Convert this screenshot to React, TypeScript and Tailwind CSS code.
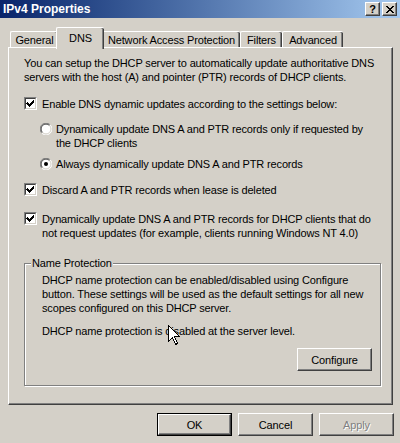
import type { ReactNode } from 'react';

const Check = ({ checked }: { checked: boolean }) => (
  <div className="w-[13px] h-[13px] shrink-0 border border-t-[#808080] border-l-[#808080] border-r-white border-b-white">
    <div className="w-full h-full bg-white border border-t-[#404040] border-l-[#404040] border-r-[#d4d0c8] border-b-[#d4d0c8] flex items-center justify-center">
      {checked && (
        <svg width="9" height="9" viewBox="0 0 9 9" shapeRendering="crispEdges">
          <path d="M1 3h1v1h1v1h1v-1h1v-1h1v-1h1v-1h1v3h-1v1h-1v1h-1v1h-1v1h-1v-1h-1v-1h-1v-1h-1z" fill="#000" />
        </svg>
      )}
    </div>
  </div>
);

const Radio = ({ selected }: { selected: boolean }) => (
  <svg width="12" height="12" viewBox="0 0 12 12" className="shrink-0">
    <circle cx="6" cy="6" r="5.5" fill="#fff" />
    <path d="M1.8 10.2 A5.5 5.5 0 0 1 10.2 1.8" fill="none" stroke="#808080" strokeWidth="1" />
    <path d="M10.2 1.8 A5.5 5.5 0 0 1 1.8 10.2" fill="none" stroke="#fff" strokeWidth="1" />
    <path d="M2.5 9.5 A4.5 4.5 0 0 1 9.5 2.5" fill="none" stroke="#404040" strokeWidth="1" />
    <path d="M9.5 2.5 A4.5 4.5 0 0 1 2.5 9.5" fill="none" stroke="#d4d0c8" strokeWidth="1" />
    {selected && <circle cx="6" cy="6" r="2" fill="#000" />}
  </svg>
);

const Button = ({ children, primary, disabled }: { children: ReactNode; primary?: boolean; disabled?: boolean }) => {
  const inner = (
    <div className="w-full h-full flex items-center justify-center border border-t-white border-l-white border-r-[#404040] border-b-[#404040] shadow-[inset_-1px_-1px_0_#808080]">
      <span className={disabled ? 'text-[#808080] [text-shadow:1px_1px_0_#fff]' : ''}>{children}</span>
    </div>
  );
  if (primary) {
    return <div className="w-[75px] h-[23px] border border-black">{inner}</div>;
  }
  return <div className="w-[75px] h-[23px]">{inner}</div>;
};

const Tab = ({ label, w, active }: { label: string; w: string; active?: boolean }) => (
  <div
    className={
      active
        ? `${w} h-[22px] -mx-[2px] -mb-[2px] relative z-10 bg-[#d4d0c8] border-t border-l border-t-white border-l-white rounded-tl-[2px] rounded-tr-[2px] shadow-[inset_-1px_0_0_#404040,inset_-2px_0_0_#808080] flex justify-center pt-[3px]`
        : `${w} h-[16px] bg-[#d4d0c8] border-t border-l border-t-white border-l-white rounded-tl-[2px] rounded-tr-[2px] shadow-[inset_-1px_0_0_#404040,inset_-2px_0_0_#808080] flex justify-center pt-[1px]`
    }
  >
    <span className="leading-[14px]">{label}</span>
  </div>
);

export default function App() {
  return (
    <div className="w-[400px] h-[443px] bg-[#d4d0c8] flex flex-col relative overflow-hidden text-black text-[11px] leading-[14px] tracking-[-0.15px] font-['Liberation_Sans',Arial,sans-serif]">
      {/* title bar */}
      <div className="h-[18px] flex items-center justify-between pl-[3px] pr-[3px] bg-gradient-to-r from-[#0a246a] to-[#a6caf0]">
        <span className="text-white font-bold text-[12px] leading-[16px] tracking-normal">IPv4 Properties</span>
        <div className="flex gap-[2px]">
          <div className="w-[15px] h-[14px] bg-[#d4d0c8] border border-t-white border-l-white border-r-[#404040] border-b-[#404040] shadow-[inset_-1px_-1px_0_#808080] flex items-center justify-center">
            <span className="font-bold text-[11px] leading-[11px]">?</span>
          </div>
          <div className="w-[15px] h-[14px] bg-[#d4d0c8] border border-t-white border-l-white border-r-[#404040] border-b-[#404040] shadow-[inset_-1px_-1px_0_#808080] flex items-center justify-center">
            <svg width="8" height="7" viewBox="0 0 8 7" shapeRendering="crispEdges">
              <path d="M0 0h2v1h1v1h2v-1h1v-1h2v1h-1v1h-1v1h-1v1h1v1h1v1h1v1h-2v-1h-1v-1h-2v1h-1v1h-2v-1h1v-1h1v-1h1v-1h-1v-1h-1v-1h-1z" fill="#000" />
            </svg>
          </div>
        </div>
      </div>

      {/* tabs */}
      <div className="mt-[9px] pl-[10px] h-[20px] flex items-end">
        <Tab label="General" w="w-[48px]" />
        <Tab label="DNS" w="w-[48px]" active />
        <Tab label="Network Access Protection" w="w-[138px]" />
        <Tab label="Filters" w="w-[42px]" />
        <Tab label="Advanced" w="w-[61px]" />
      </div>

      {/* panel */}
      <div className="mx-[8px] w-[385px] h-[358px] border border-t-white border-l-white border-r-[#404040] border-b-[#404040] shadow-[inset_-1px_-1px_0_#808080] pt-[8px] pl-[15px] flex flex-col whitespace-nowrap">
        <p>
          You can setup the DHCP server to automatically update authoritative DNS
          <br />
          servers with the host (A) and pointer (PTR) records of DHCP clients.
        </p>

        <div className="mt-[13px] flex items-start gap-[5px]">
          <Check checked />
          <span>Enable DNS dynamic updates according to the settings below:</span>
        </div>

        <div className="mt-[11px] ml-[16px] flex items-start gap-[4px]">
          <div className="pt-[1px]"><Radio selected={false} /></div>
          <span>
            Dynamically update DNS A and PTR records only if requested by
            <br />
            the DHCP clients
          </span>
        </div>

        <div className="mt-[7px] ml-[16px] flex items-start gap-[4px]">
          <div className="pt-[1px]"><Radio selected /></div>
          <span>Always dynamically update DNS A and PTR records</span>
        </div>

        <div className="mt-[12px] flex items-start gap-[5px]">
          <Check checked />
          <span>Discard A and PTR records when lease is deleted</span>
        </div>

        <div className="mt-[15px] flex items-start gap-[5px]">
          <Check checked />
          <span>
            Dynamically update DNS A and PTR records for DHCP clients that do
            <br />
            not request updates (for example, clients running Windows NT 4.0)
          </span>
        </div>

        {/* group box */}
        <div className="mt-[23px] w-[357px] h-[123px] relative border border-[#808080] shadow-[inset_1px_1px_0_#fff,1px_1px_0_#fff] pt-[9px] pl-[17px] pr-[8px] flex flex-col">
          <span className="absolute -top-[8px] left-[6px] px-[1px] bg-[#d4d0c8]">Name Protection</span>
          <p>
            DHCP name protection can be enabled/disabled using Configure
            <br />
            button. These settings will be used as the default settings for all new
            <br />
            scopes configured on this DHCP server.
          </p>
          <p className="mt-[9px]">DHCP name protection is disabled at the server level.</p>
          <div className="mt-[10px] self-end">
            <Button>Configure</Button>
          </div>
        </div>
      </div>

      {/* footer buttons */}
      <div className="mt-[8px] pr-[6px] flex justify-end gap-[6px]">
        <Button primary>OK</Button>
        <Button>Cancel</Button>
        <Button disabled>Apply</Button>
      </div>

      {/* mouse pointer */}
      <svg className="absolute left-[168px] top-[325px]" width="13" height="21" viewBox="0 0 13 21" shapeRendering="crispEdges">
        <path d="M0.5 0.5 L0.5 16.5 L4.5 12.5 L7.5 19.5 L9.5 18.5 L6.5 11.5 L11.5 11.5 Z" fill="#fff" stroke="#000" strokeWidth="1" />
      </svg>
    </div>
  );
}
